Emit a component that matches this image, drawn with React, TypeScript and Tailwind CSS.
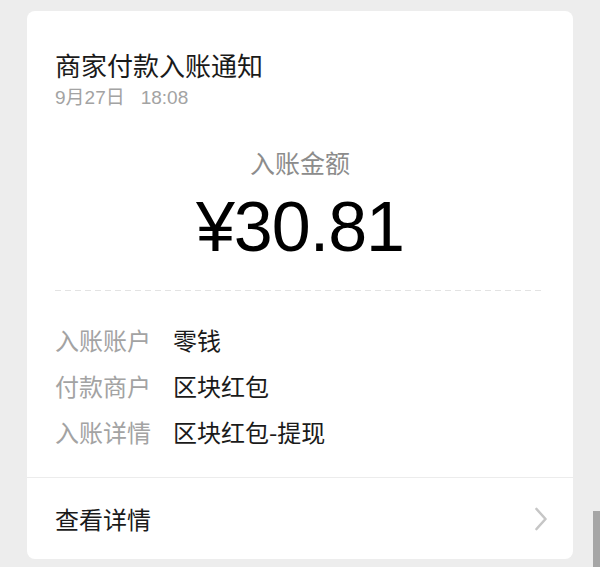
import React from "react";

const cjk = { fontFamily: '"Noto Sans CJK SC", "Noto Sans", sans-serif' };

export default function App() {
  const rows: [string, string][] = [
    ["入账账户", "零钱"],
    ["付款商户", "区块红包"],
    ["入账详情", "区块红包-提现"],
  ];
  return (
    <div className="relative w-[600px] h-[567px] overflow-hidden bg-[#ededed] pt-[11px] px-[27px]" style={cjk}>
      <div className="bg-white rounded-[8px] h-[548px] flex flex-col">
        <div className="px-[28px] pt-[36px]">
          <div className="text-[26px] leading-[36px] text-[#1a1a1a]">商家付款入账通知</div>
          <div
            className="mt-[3px] text-[19px] leading-[24px] text-[#a3a3a3] flex"
            style={{ fontFamily: '"Liberation Sans", "Noto Sans CJK SC", sans-serif' }}
          >
            <span>9月27日</span>
            <span className="ml-[16px]">18:08</span>
          </div>
          <div className="mt-[36px] text-center text-[25px] leading-[32px] text-[#8c8c8c]">入账金额</div>
          <div
            className="mt-[14px] text-center text-[70px] leading-[70px] text-black tracking-[-1px]"
            style={{ fontFamily: '"Liberation Sans", Arial, sans-serif' }}
          >
            ¥30.81
          </div>
          <div className="mt-[28px] h-px bg-[repeating-linear-gradient(to_right,#e3e3e3_0,#e3e3e3_6px,transparent_6px,transparent_10px)]" />
          <div className="mt-[26px] pb-[22px] flex flex-col">
            {rows.map(([k, v]) => (
              <div key={k} className="flex h-[46px] items-center text-[24px] leading-[46px]">
                <span className="w-[118px] text-[#a3a3a3]">{k}</span>
                <span className="text-[#1a1a1a]">{v}</span>
              </div>
            ))}
          </div>
        </div>
        <div className="border-t border-[#ececec] flex-1 flex items-center justify-between pl-[28px] pr-[25px]">
          <span className="text-[24px] leading-[32px] text-[#1a1a1a]">查看详情</span>
          <svg width="14" height="24" viewBox="0 0 14 24" fill="none">
            <polyline points="2.5,2 11.5,12 2.5,22" stroke="#c6c6c6" strokeWidth="2.6" strokeLinecap="round" strokeLinejoin="round" />
          </svg>
        </div>
      </div>
      <div className="absolute right-0 top-[511px] w-[7px] h-[56px] bg-[#a6a6a6]" />
    </div>
  );
}
